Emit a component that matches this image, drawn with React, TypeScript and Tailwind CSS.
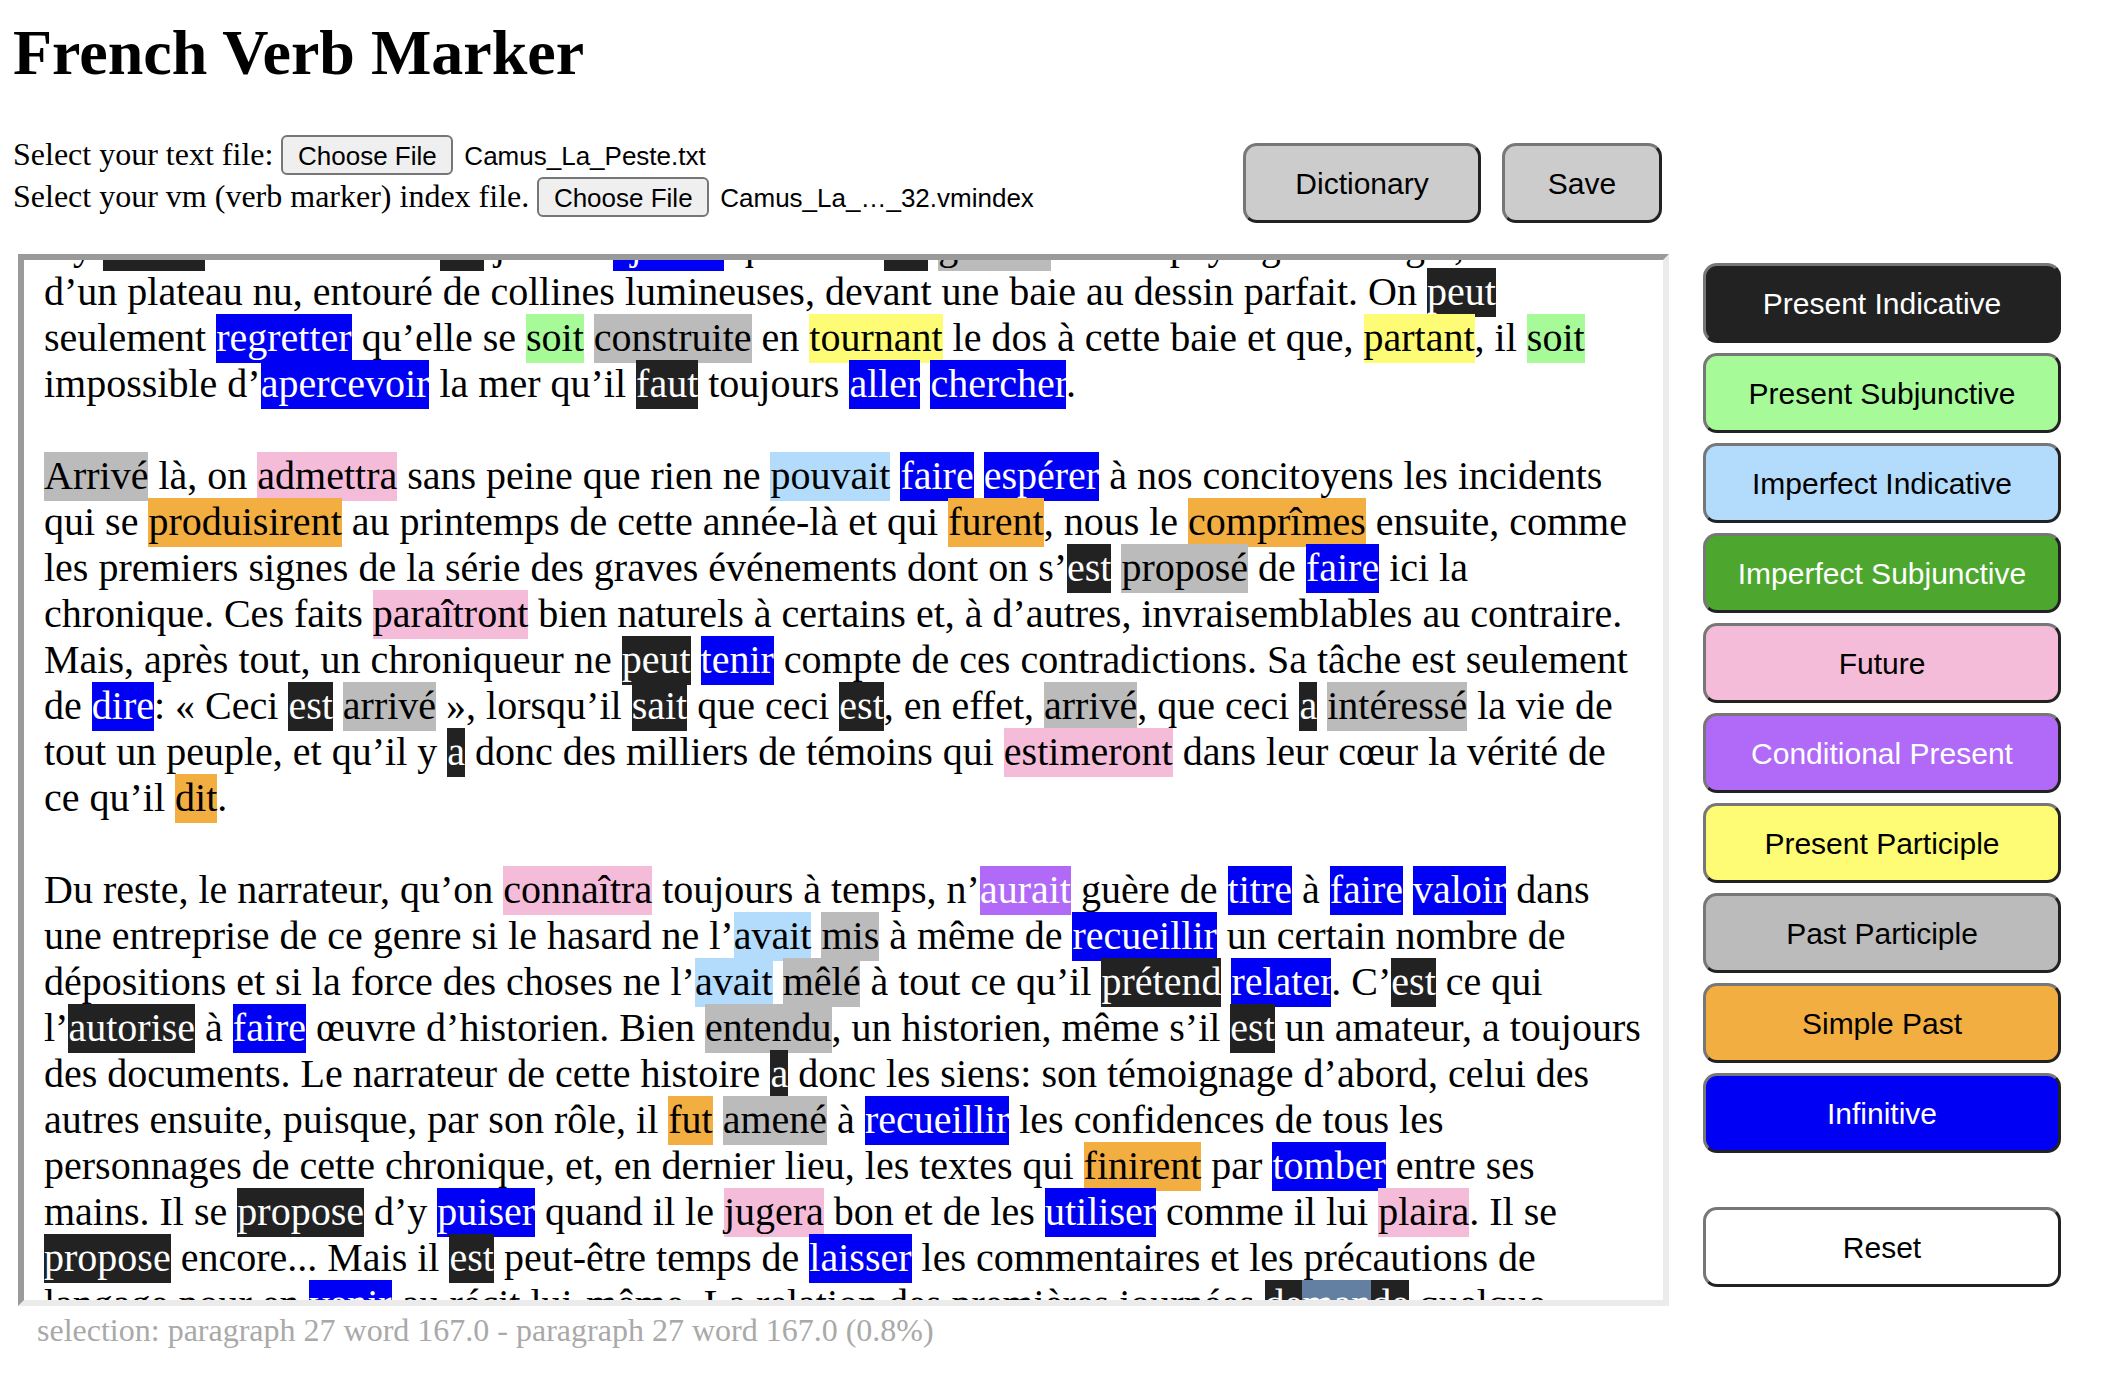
import React from "react";

const STY: Record<string, string> = {
  PI: "bg-[#222222] text-white",
  PS: "bg-[#a6fa98]",
  II: "bg-[#b3dbfb]",
  IS: "bg-[#4da72f] text-white",
  FU: "bg-[#f4bcd9]",
  CO: "bg-[#b06af7] text-white",
  PP: "bg-[#fefc74]",
  PA: "bg-[#bbbbbb]",
  SP: "bg-[#f3ae42]",
  IN: "bg-[#0000f5] text-white",
  SEL: "bg-[#6380a2] text-white",
};

const LINES: string[] = [
  "s’y {PI:endort} enfin. Mais il {PI:est} juste d’{IN:ajouter} qu’elle s’{PI:est} {PA:greffée} sur un paysage sans égal, au milieu",
  "d’un plateau nu, entouré de collines lumineuses, devant une baie au dessin parfait. On {PI:peut}",
  "seulement {IN:regretter} qu’elle se {PS:soit} {PA:construite} en {PP:tournant} le dos à cette baie et que, {PP:partant}, il {PS:soit}",
  "impossible d’{IN:apercevoir} la mer qu’il {PI:faut} toujours {IN:aller} {IN:chercher}.",
  "",
  "{PA:Arrivé} là, on {FU:admettra} sans peine que rien ne {II:pouvait} {IN:faire} {IN:espérer} à nos concitoyens les incidents",
  "qui se {SP:produisirent} au printemps de cette année-là et qui {SP:furent}, nous le {SP:comprîmes} ensuite, comme",
  "les premiers signes de la série des graves événements dont on s’{PI:est} {PA:proposé} de {IN:faire} ici la",
  "chronique. Ces faits {FU:paraîtront} bien naturels à certains et, à d’autres, invraisemblables au contraire.",
  "Mais, après tout, un chroniqueur ne {PI:peut} {IN:tenir} compte de ces contradictions. Sa tâche est seulement",
  "de {IN:dire}: « Ceci {PI:est} {PA:arrivé} », lorsqu’il {PI:sait} que ceci {PI:est}, en effet, {PA:arrivé}, que ceci {PI:a} {PA:intéressé} la vie de",
  "tout un peuple, et qu’il y {PI:a} donc des milliers de témoins qui {FU:estimeront} dans leur cœur la vérité de",
  "ce qu’il {SP:dit}.",
  "",
  "Du reste, le narrateur, qu’on {FU:connaîtra} toujours à temps, n’{CO:aurait} guère de {IN:titre} à {IN:faire} {IN:valoir} dans",
  "une entreprise de ce genre si le hasard ne l’{II:avait} {PA:mis} à même de {IN:recueillir} un certain nombre de",
  "dépositions et si la force des choses ne l’{II:avait} {PA:mêlé} à tout ce qu’il {PI:prétend} {IN:relater}. C’{PI:est} ce qui",
  "l’{PI:autorise} à {IN:faire} œuvre d’historien. Bien {PA:entendu}, un historien, même s’il {PI:est} un amateur, a toujours",
  "des documents. Le narrateur de cette histoire {PI:a} donc les siens: son témoignage d’abord, celui des",
  "autres ensuite, puisque, par son rôle, il {SP:fut} {PA:amené} à {IN:recueillir} les confidences de tous les",
  "personnages de cette chronique, et, en dernier lieu, les textes qui {SP:finirent} par {IN:tomber} entre ses",
  "mains. Il se {PI:propose} d’y {IN:puiser} quand il le {FU:jugera} bon et de les {IN:utiliser} comme il lui {FU:plaira}. Il se",
  "{PI:propose} encore... Mais il {PI:est} peut-être temps de {IN:laisser} les commentaires et les précautions de",
  "langage pour en {IN:venir} au récit lui-même. La relation des premières journées {PI:de}{SEL:man}{PI:de} quelque",
];

function Line({ src }: { src: string }) {
  const parts: React.ReactNode[] = [];
  const re = /\{(\w+):([^}]+)\}/g;
  let last = 0;
  let m: RegExpExecArray | null;
  let i = 0;
  while ((m = re.exec(src))) {
    if (m.index > last) parts.push(<React.Fragment key={i++}>{src.slice(last, m.index)}</React.Fragment>);
    parts.push(
      <span key={i++} className={`${STY[m[1]]} pt-px pb-[3px]`}>
        {m[2]}
      </span>
    );
    last = re.lastIndex;
  }
  if (last < src.length) parts.push(<React.Fragment key={i++}>{src.slice(last)}</React.Fragment>);
  return <div className="h-[46px] leading-[43px] whitespace-pre">{parts.length ? parts : "\u00a0"}</div>;
}

const LEGEND: [string, string][] = [
  ["Present Indicative", "bg-[#222222] text-white"],
  ["Present Subjunctive", "bg-[#a6fa98] text-black"],
  ["Imperfect Indicative", "bg-[#b3dbfb] text-black"],
  ["Imperfect Subjunctive", "bg-[#4da72f] text-white"],
  ["Future", "bg-[#f4bcd9] text-black"],
  ["Conditional Present", "bg-[#b06af7] text-white"],
  ["Present Participle", "bg-[#fefc74] text-black"],
  ["Past Participle", "bg-[#bbbbbb] text-black"],
  ["Simple Past", "bg-[#f3ae42] text-black"],
  ["Infinitive", "bg-[#0000f5] text-white"],
];

const BTN =
  "flex items-center justify-center h-[80px] rounded-[14px] border-[3px] border-t-[#777777] border-l-[#777777] border-b-[#222222] border-r-[#222222] text-[30px] font-['Liberation_Sans',Arial,sans-serif]";

function FileRow({ label, file }: { label: string; file: string }) {
  return (
    <div className="flex items-baseline h-[40px]">
      <span className="text-[32px] leading-[normal]">{label}</span>
      <button className="ml-[8px] w-[172px] h-[40px] rounded-[6px] border-2 border-[#767676] bg-[#efefef] text-[26px] text-black font-['Liberation_Sans',Arial,sans-serif]">
        Choose File
      </button>
      <span className="ml-[11px] text-[26px] font-['Liberation_Sans',Arial,sans-serif]">{file}</span>
    </div>
  );
}

export default function App() {
  return (
    <div className="w-[2118px] h-[1376px] bg-white overflow-hidden text-black font-['Liberation_Serif','Times_New_Roman',serif] pl-[13px] pt-[16px]">
      <h1 className="text-[64px] font-bold leading-[74px]">French Verb Marker</h1>

      <div className="flex items-start mt-[45px]">
        <div className="w-[1230px] flex flex-col gap-[2px]">
          <FileRow label="Select your text file:" file="Camus_La_Peste.txt" />
          <FileRow label="Select your vm (verb marker) index file." file="Camus_La_…_32.vmindex" />
        </div>
        <div className="flex gap-[21px] mt-[8px]">
          <div className={`${BTN} w-[238px] bg-[#cccccc]`}>Dictionary</div>
          <div className={`${BTN} w-[160px] bg-[#cccccc]`}>Save</div>
        </div>
      </div>

      <div className="flex items-start mt-[31px]">
        <div className="ml-[5px] w-[1651px] h-[1052px] border-[6px] border-t-[#9a9a9a] border-l-[#9a9a9a] border-b-[#ebebeb] border-r-[#ebebeb] overflow-hidden">
          <div className="px-[20px] mt-[-36px] text-[40px]">
            {LINES.map((l, i) => (
              <Line key={i} src={l} />
            ))}
          </div>
        </div>
        <div className="ml-[34px] w-[358px] pt-[9px] flex flex-col">
          {LEGEND.map(([name, cls]) => (
            <div key={name} className={`${BTN} ${cls} mb-[10px]`}>
              {name}
            </div>
          ))}
          <div className={`${BTN} bg-white text-black mt-[44px]`}>Reset</div>
        </div>
      </div>

      <div className="ml-[24px] mt-[6px] text-[32px] leading-[normal] text-[#a9a9a9]">
        selection: paragraph 27 word 167.0 - paragraph 27 word 167.0 (0.8%)
      </div>
    </div>
  );
}
